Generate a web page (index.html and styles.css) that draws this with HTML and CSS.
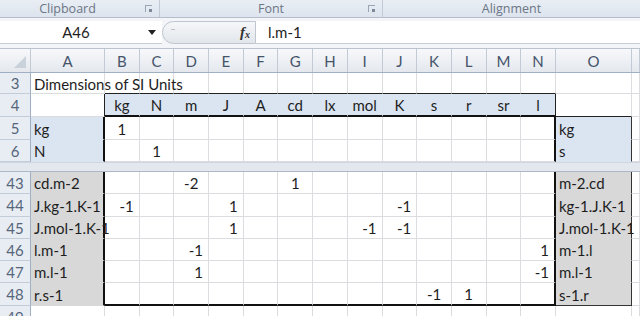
FILE: index.html
```html
<!DOCTYPE html>
<html lang="en">
<head>
    <meta charset="UTF-8">
    <title>Dimensions of SI Units</title>
    <link rel="stylesheet" href="styles.css">
</head>
<body>

<div class="ribbon">
    <div class="group clip"><span class="label">Clipboard</span><span class="launcher"></span></div>
    <div class="group font"><span class="label">Font</span><span class="launcher"></span></div>
    <div class="group align"><span class="label">Alignment</span></div>
</div>

<div class="fbar">
    <div class="name-box">
        <span class="name">A46</span>
        <svg class="drop" width="8" height="5" viewBox="0 0 8 5"><path d="M0 0h8L4 5z" fill="#222"/></svg>
    </div>
    <div class="fx-zone">
        <span class="grip"></span>
        <span class="fx">f<sub>x</sub></span>
    </div>
    <div class="formula">l.m-1</div>
</div>

<div class="sheet">
    <div class="row head">
        <div class="corner"><span class="tri"></span></div>
        <div class="ch">A</div><div class="ch">B</div><div class="ch">C</div><div class="ch">D</div>
        <div class="ch">E</div><div class="ch">F</div><div class="ch">G</div><div class="ch">H</div>
        <div class="ch">I</div><div class="ch">J</div><div class="ch">K</div><div class="ch">L</div>
        <div class="ch">M</div><div class="ch">N</div><div class="ch">O</div><div class="ch"></div>
    </div>

    <div class="row h21">
        <div class="rh">3</div>
        <div class="c over">Dimensions of SI Units</div>
        <div class="c top-b"></div><div class="c top-b"></div><div class="c top-b"></div><div class="c top-b"></div>
        <div class="c top-b"></div><div class="c top-b"></div><div class="c top-b"></div><div class="c top-b"></div>
        <div class="c top-b"></div><div class="c top-b"></div><div class="c top-b"></div><div class="c top-b"></div>
        <div class="c top-b"></div>
        <div class="c"></div><div class="c"></div>
    </div>

    <div class="row h23">
        <div class="rh">4</div>
        <div class="c edge1"></div>
        <div class="c blue unit end4">kg</div><div class="c blue unit end4">N</div><div class="c blue unit end4">m</div>
        <div class="c blue unit end4">J</div><div class="c blue unit end4">A</div><div class="c blue unit end4">cd</div>
        <div class="c blue unit end4">lx</div><div class="c blue unit end4">mol</div><div class="c blue unit end4">K</div>
        <div class="c blue unit end4">s</div><div class="c blue unit end4">r</div><div class="c blue unit end4">sr</div>
        <div class="c blue unit end4 edge1">l</div>
        <div class="c open-o"></div><div class="c"></div>
    </div>

    <div class="row h23">
        <div class="rh">5</div>
        <div class="c blue edge">kg</div>
        <div class="c mid">1</div><div class="c"></div><div class="c"></div><div class="c"></div><div class="c"></div>
        <div class="c"></div><div class="c"></div><div class="c"></div><div class="c"></div><div class="c"></div>
        <div class="c"></div><div class="c"></div><div class="c edge"></div>
        <div class="c blue side">kg</div><div class="c"></div>
    </div>

    <div class="row">
        <div class="rh">6</div>
        <div class="c blue edge">N</div>
        <div class="c"></div><div class="c mid">1</div><div class="c"></div><div class="c"></div><div class="c"></div>
        <div class="c"></div><div class="c"></div><div class="c"></div><div class="c"></div><div class="c"></div>
        <div class="c"></div><div class="c"></div><div class="c edge"></div>
        <div class="c blue side">s</div><div class="c"></div>
    </div>

    <div class="split"></div>

    <div class="row">
        <div class="rh">43</div>
        <div class="c grey edge">cd.m-2</div>
        <div class="c"></div><div class="c"></div><div class="c mid">-2</div><div class="c"></div><div class="c"></div>
        <div class="c mid">1</div><div class="c"></div><div class="c"></div><div class="c"></div><div class="c"></div>
        <div class="c"></div><div class="c"></div><div class="c edge"></div>
        <div class="c grey side">m-2.cd</div><div class="c"></div>
    </div>

    <div class="row h23">
        <div class="rh">44</div>
        <div class="c grey edge">J.kg-1.K-1</div>
        <div class="c num">-1</div><div class="c"></div><div class="c"></div><div class="c num">1</div><div class="c"></div>
        <div class="c"></div><div class="c"></div><div class="c"></div><div class="c num">-1</div><div class="c"></div>
        <div class="c"></div><div class="c"></div><div class="c edge"></div>
        <div class="c grey side">kg-1.J.K-1</div><div class="c"></div>
    </div>

    <div class="row">
        <div class="rh">45</div>
        <div class="c grey edge over">J.mol-1.K-1</div>
        <div class="c"></div><div class="c"></div><div class="c"></div><div class="c num">1</div><div class="c"></div>
        <div class="c"></div><div class="c"></div><div class="c num">-1</div><div class="c num">-1</div><div class="c"></div>
        <div class="c"></div><div class="c"></div><div class="c edge"></div>
        <div class="c grey side over">J.mol-1.K-1</div><div class="c"></div>
    </div>

    <div class="row">
        <div class="rh">46</div>
        <div class="c grey edge">l.m-1</div>
        <div class="c"></div><div class="c"></div><div class="c num">-1</div><div class="c"></div><div class="c"></div>
        <div class="c"></div><div class="c"></div><div class="c"></div><div class="c"></div><div class="c"></div>
        <div class="c"></div><div class="c"></div><div class="c edge num">1</div>
        <div class="c grey side">m-1.l</div><div class="c"></div>
    </div>

    <div class="row">
        <div class="rh">47</div>
        <div class="c grey edge">m.l-1</div>
        <div class="c"></div><div class="c"></div><div class="c num">1</div><div class="c"></div><div class="c"></div>
        <div class="c"></div><div class="c"></div><div class="c"></div><div class="c"></div><div class="c"></div>
        <div class="c"></div><div class="c"></div><div class="c edge num">-1</div>
        <div class="c grey side">m.l-1</div><div class="c"></div>
    </div>

    <div class="row h23">
        <div class="rh">48</div>
        <div class="c grey edge">r.s-1</div>
        <div class="c foot"></div><div class="c foot"></div><div class="c foot"></div><div class="c foot"></div>
        <div class="c foot"></div><div class="c foot"></div><div class="c foot"></div><div class="c foot"></div>
        <div class="c foot"></div><div class="c foot mid">-1</div><div class="c foot mid">1</div><div class="c foot"></div>
        <div class="c foot edge"></div>
        <div class="c grey side last">s-1.r</div><div class="c"></div>
    </div>

    <div class="row">
        <div class="rh">49</div>
        <div class="c"></div><div class="c"></div><div class="c"></div><div class="c"></div><div class="c"></div>
        <div class="c"></div><div class="c"></div><div class="c"></div><div class="c"></div><div class="c"></div>
        <div class="c"></div><div class="c"></div><div class="c"></div><div class="c"></div><div class="c"></div>
        <div class="c"></div>
    </div>
</div>

</body>
</html>
```

FILE: styles.css
```css
* {
    margin: 0;
    padding: 0;
    box-sizing: border-box;
}

body {
    width: 640px;
    height: 316px;
    overflow: hidden;
    background-color: #fff;
    font-family: 'Lato', 'Liberation Sans', sans-serif;
    color: #1e1e1e;
}

/* ribbon group labels */
.ribbon {
    display: flex;
    height: 18px;
    background: linear-gradient(#e9eef5, #dde4ed);
    border-bottom: 1px solid #b4bdc9;
}

.group {
    position: relative;
    display: flex;
    justify-content: center;
    align-items: center;
    border-right: 1px solid #c2cad5;
}

.group.clip { width: 160px; }
.group.font { width: 223px; }
.group.align { flex: 1; border-right: none; }

.group.clip .label { margin-right: 24px; }

.label {
    font-family: 'Open Sans', sans-serif;
    font-size: 12.5px;
    color: #6b7686;
}

.launcher {
    position: absolute;
    right: 7px;
    top: 5px;
    width: 7px;
    height: 7px;
    border-top: 1px solid #9aa5b3;
    border-left: 1px solid #9aa5b3;
}

.launcher::after {
    content: '';
    position: absolute;
    right: 0;
    bottom: 0;
    width: 3px;
    height: 3px;
    background-color: #7d8998;
}

/* formula bar */
.fbar {
    display: flex;
    height: 31px;
    padding: 3px 0 4px;
    background-color: #f3f5f8;
    border-bottom: 1px solid #b9c2ce;
}

.name-box {
    display: flex;
    align-items: center;
    width: 162px;
    background-color: #fff;
    border-bottom: 1px solid #c8ced6;
}

.name {
    flex: 1;
    text-align: center;
    font-size: 15px;
    padding-left: 8px;
}

.drop {
    margin: 0 6px 0 4px;
}

.fx-zone {
    display: flex;
    align-items: center;
    justify-content: space-between;
    width: 94px;
    padding: 0 5px 0 8px;
    background: linear-gradient(#f6f7f9, #e2e6eb);
    border: 1px solid #bfc6cf;
    border-radius: 12px 0 0 12px;
}

.grip {
    width: 4px;
    height: 1px;
    margin-top: -6px;
    background-color: #b9c0ca;
}

.fx {
    font-family: 'Liberation Serif', serif;
    font-style: italic;
    font-weight: bold;
    font-size: 15px;
    color: #333;
}

.fx sub {
    font-size: 10px;
    vertical-align: -1px;
}

.formula {
    flex: 1;
    display: flex;
    align-items: center;
    padding-left: 12px;
    background-color: #fff;
    border-bottom: 1px solid #c8ced6;
    font-size: 15px;
}

/* grid */
.row {
    display: grid;
    grid-template-columns: 31px 74px repeat(13, 34.7px) 76px 1fr;
    height: 22px;
}

.row.h21 { height: 21px; }
.row.h23 { height: 23px; }

.row.head {
    height: 24px;
    background: linear-gradient(#f7f8fa, #e4e8ee);
    border-bottom: 1px solid #9fb0c4;
}

.corner {
    display: flex;
    justify-content: flex-end;
    align-items: flex-end;
    padding: 0 4px 4px 0;
    border-right: 1px solid #c3cad4;
}

.tri {
    width: 0;
    height: 0;
    border-left: 12px solid transparent;
    border-bottom: 12px solid #c9d1db;
}

.ch {
    display: flex;
    justify-content: center;
    align-items: center;
    font-size: 15px;
    color: #46546a;
    border-right: 1px solid #c3cad4;
}

.rh {
    display: flex;
    justify-content: center;
    align-items: center;
    font-size: 15px;
    color: #55657a;
    background-color: #e8edf3;
    border-right: 1px solid #9fb0c4;
    border-bottom: 1px solid #c3cdd9;
}

.c {
    display: flex;
    align-items: center;
    padding: 1px 3px 0;
    font-size: 15px;
    white-space: nowrap;
    border-right: 1px solid #dadcdf;
    border-bottom: 1px solid #dadcdf;
}

.c.over {
    position: relative;
    z-index: 1;
}

.c.mid { justify-content: center; }
.c.num { justify-content: flex-end; padding-right: 5px; }
.c.unit { justify-content: center; }

.c.blue {
    background-color: #dbe5f1;
    border-color: #dbe5f1;
}

.c.grey {
    background-color: #d8d8d8;
    border-color: #d8d8d8;
}

/* box borders */
.c.top-b { border-bottom-color: #222; }
.c.edge1 { border-right-color: #222; }
.c.end4 { border-bottom: 2px solid #111; }
.c.blue.end4.edge1 { border-right: 1px solid #222; }
.c.edge { border-right: 2px solid #111; }
.c.open-o { border-bottom-color: #222; }
.c.side { border-right: 1px solid #333; }
.c.foot { border-bottom: 2px solid #111; }
.c.foot.edge { border-right: 2px solid #111; }
.c.side.last { border-bottom: 1px solid #333; }

.split {
    height: 10px;
    background-color: #e3e8ef;
    border-top: 1px solid #cfd6df;
    border-bottom: 1px solid #aeb8c5;
}
```
